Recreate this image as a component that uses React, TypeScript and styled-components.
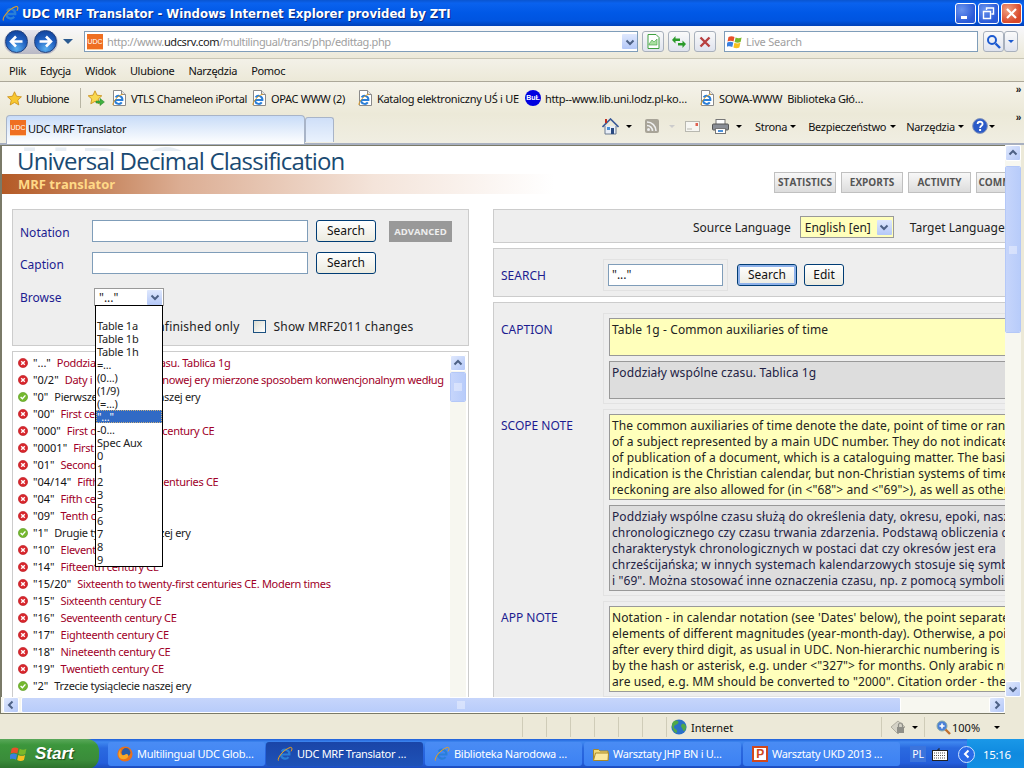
import React from 'react';
import styled, { createGlobalStyle } from 'styled-components';

const UI_FONT = '"Noto Sans", "DejaVu Sans", sans-serif';

const GlobalStyle = createGlobalStyle`
  html, body {
    margin: 0;
    padding: 0;
    width: 1024px;
    height: 768px;
    overflow: hidden;
    font-family: ${UI_FONT};
    font-size: 11px;
  }
  * { box-sizing: border-box; }
`;

const Window = styled.div`
  width: 1024px;
  height: 768px;
  display: flex;
  flex-direction: column;
  background: #ece9d8;
  overflow: hidden;
  letter-spacing: -0.3px;
`;

/* ---------- title bar ---------- */
const TitleBar = styled.div`
  height: 26px;
  flex: none;
  display: flex;
  align-items: center;
  padding: 0 2px 0 2px;
  letter-spacing: 0;
  background: linear-gradient(180deg, #0a55d0 0%, #0a62ee 12%, #0058e6 50%, #0054e0 80%, #0040b8 100%);
`;

const TitleText = styled.div`
  flex: 1;
  margin-left: 3px;
  color: #fff;
  font: bold 13px "DejaVu Sans Condensed", "Liberation Sans", sans-serif;
  text-shadow: 1px 1px 0 #0a2a80;
  white-space: nowrap;
`;

const WinButton = styled.div<{ $close?: boolean }>`
  width: 21px;
  height: 21px;
  margin-left: 2px;
  border: 1px solid #fff;
  border-radius: 3px;
  display: flex;
  align-items: center;
  justify-content: center;
  background: ${(p) =>
    p.$close
      ? 'radial-gradient(circle at 30% 30%, #f0a080, #d8482a 70%)'
      : 'radial-gradient(circle at 30% 30%, #6a94ee, #2a5ad8 70%)'};
`;

/* ---------- address row ---------- */
const AddressRow = styled.div`
  height: 33px;
  flex: none;
  display: flex;
  align-items: center;
  padding: 0 0 1px 4px;
  background: linear-gradient(180deg, #f8f8fc, #ece9d8);
  border-bottom: 1px solid #c8c5b4;
`;

const NavCapsule = styled.div`
  width: 54px;
  height: 24px;
  border-radius: 12px;
  display: flex;
  align-items: center;
  justify-content: space-between;
  padding: 0 1px;
  background: linear-gradient(180deg, #e6e6ee, #b8b8c4);
`;

const NavBall = styled.div`
  width: 23px;
  height: 23px;
  border-radius: 50%;
  border: 1px solid #20407c;
  display: flex;
  align-items: center;
  justify-content: center;
  background: radial-gradient(circle at 50% 85%, #5ab0f0 0%, #2060c0 50%, #0c3a90 100%);
`;

const TinyCaret = styled.span<{ $color?: string; $ml?: number; $big?: boolean }>`
  display: inline-block;
  flex: none;
  width: 0;
  height: 0;
  border-left: ${(p) => (p.$big ? 5 : 3)}px solid transparent;
  border-right: ${(p) => (p.$big ? 5 : 3)}px solid transparent;
  border-top: ${(p) => (p.$big ? 5 : 3)}px solid ${(p) => p.$color || '#000'};
  margin-left: ${(p) => p.$ml ?? 0}px;
`;

const AddressBox = styled.div`
  width: 554px;
  height: 21px;
  margin-left: 11px;
  border: 1px solid #7f9db9;
  background: #fff;
  display: flex;
  align-items: center;
  padding-left: 2px;
  font-size: 11px;
  letter-spacing: -0.38px;
  color: #a0a0a0;
  white-space: nowrap;
`;

const Domain = styled.span`
  color: #222;
`;

const Favicon = styled.span<{ $mr?: number }>`
  flex: none;
  width: 16px;
  height: 16px;
  background: #ef6f22;
  color: #fff;
  font: 7px/15px "Liberation Sans", sans-serif;
  letter-spacing: 0;
  text-align: center;
  border-bottom: 1px solid #ffd0a0;
  overflow: hidden;
  margin-right: ${(p) => p.$mr ?? 0}px;
`;

const ComboArrow = styled.div`
  width: 15px;
  height: 15px;
  flex: none;
  margin-left: auto;
  display: flex;
  align-items: center;
  justify-content: center;
  border-radius: 1px;
  background: linear-gradient(180deg, #dfe8fd, #b4c8f8);
`;

const ToolBtn = styled.div<{ $ml: number; $w?: number }>`
  width: ${(p) => p.$w ?? 22}px;
  height: 21px;
  flex: none;
  margin-left: ${(p) => p.$ml}px;
  border: 1px solid #a8b0bc;
  border-radius: 3px;
  background: linear-gradient(180deg, #fafafa, #dfe3ee);
  display: flex;
  align-items: center;
  justify-content: center;
`;

const LiveSearch = styled.div`
  width: 254px;
  height: 21px;
  margin-left: 8px;
  flex: none;
  border: 1px solid #7f9db9;
  background: #fff;
  display: flex;
  align-items: center;
  gap: 3px;
  padding-left: 2px;
  color: #a0a0a0;
  font-size: 11px;
  letter-spacing: -0.2px;
`;

/* ---------- menu and favourites ---------- */
const MenuRow = styled.div`
  height: 23px;
  flex: none;
  display: flex;
  align-items: center;
  padding: 1px 0 0 9px;
  gap: 14px;
  color: #111;
  background: linear-gradient(180deg, #f3f1e8, #ece9d8);
  border-bottom: 1px solid #aca899;
`;

const FavRow = styled.div`
  height: 32px;
  flex: none;
  position: relative;
  display: flex;
  align-items: center;
  padding-left: 7px;
  color: #111;
  background: linear-gradient(180deg, #f5f3ea, #ece9d8);
  white-space: nowrap;
`;

const FavLabel = styled.span`
  margin-left: 4px;
  letter-spacing: -0.5px;
`;

const FavSep = styled.div`
  width: 1px;
  height: 20px;
  background: #b8b5a4;
  margin: 0 7px 0 11px;
`;

const FavLink = styled.span<{ $ml?: number; $w: number }>`
  display: flex;
  align-items: center;
  gap: 4px;
  margin-left: ${(p) => p.$ml ?? 0}px;
  width: ${(p) => p.$w}px;
  flex: none;
`;

const Chevrons = styled.span<{ $top: number }>`
  position: absolute;
  right: 3px;
  top: ${(p) => p.$top}px;
  font: bold 10px "Liberation Sans", sans-serif;
  color: #111;
`;

const TabRow = styled.div`
  height: 31px;
  flex: none;
  position: relative;
  display: flex;
  align-items: center;
  padding-left: 6px;
  color: #111;
  background: linear-gradient(180deg, #ece9d8, #f0eee2);
  border-bottom: 2px solid #a8b0c0;
`;

const ActiveTab = styled.div`
  width: 299px;
  height: 29px;
  margin-top: 1px;
  border: 1px solid #a8b4c8;
  border-bottom: none;
  border-radius: 4px 4px 0 0;
  display: flex;
  align-items: center;
  gap: 2px;
  padding: 0 0 3px 3px;
  background: linear-gradient(180deg, #c8dcf8, #fff);
`;

const NewTab = styled.div`
  width: 29px;
  height: 25px;
  margin-top: 2px;
  border: 1px solid #a8b4c8;
  border-bottom: none;
  border-radius: 3px 3px 0 0;
  background: linear-gradient(180deg, #cfdff8, #eaf2fd);
`;

const CommandBar = styled.div`
  position: absolute;
  left: 602px;
  top: 0;
  height: 24px;
  display: flex;
  align-items: center;
`;

const CommandText = styled.span<{ $ml: number }>`
  margin-left: ${(p) => p.$ml}px;
  white-space: nowrap;
`;

const IconSlot = styled.span<{ $ml?: number; $mr?: number }>`
  display: flex;
  flex: none;
  margin-left: ${(p) => p.$ml ?? 0}px;
  margin-right: ${(p) => p.$mr ?? 0}px;
`;

/* ---------- page viewport ---------- */
const Viewport = styled.div`
  height: 552px;
  flex: none;
  display: flex;
  padding-right: 3px;
`;

const Page = styled.div`
  width: 1005px;
  flex: none;
  background: #fff;
  border-left: 2px solid #7a7a68;
  border-top: 1px solid #7a7a68;
  overflow: hidden;
  color: #222;
  font-size: 12px;
  letter-spacing: 0;
`;

const Header = styled.div`
  height: 63px;
  display: flex;
  justify-content: space-between;
  position: relative;
`;

const Watermark = styled.div`
  position: absolute;
  left: 16px;
  top: 0;
  height: 5px;
  overflow: hidden;
  font: bold 72px/50px "Open Sans", sans-serif;
  letter-spacing: 6px;
  color: #e6ecf2;
`;

const Brand = styled.div`
  width: 600px;
  display: flex;
  flex-direction: column;
  padding-top: 2px;
  position: relative;
`;

const BrandTitle = styled.div`
  height: 26px;
  padding-left: 15px;
  font: 24px/26px "Open Sans", "Noto Sans", sans-serif;
  color: #1a4a72;
  letter-spacing: -0.8px;
  white-space: nowrap;
`;

const BrandBand = styled.div`
  height: 20px;
  padding-left: 16px;
  font: bold 13px/20px "Open Sans", sans-serif;
  color: #ffd987;
  background: linear-gradient(90deg, #b45a26 0%, #c98a64 18%, #dcae94 30%, #f4e4da 62%, #fff 92%);
`;

const TopTabs = styled.div`
  display: flex;
  gap: 5px;
  padding-top: 26px;
  margin-right: -34px;
`;

const TopTab = styled.div<{ $w: number }>`
  width: ${(p) => p.$w}px;
  height: 21px;
  border: 1px solid #c0c0c0;
  background: linear-gradient(180deg, #f8f8f8, #dcdcdc);
  color: #555;
  font: bold 10px/19px "Open Sans", "Noto Sans", sans-serif;
  text-align: center;
  overflow: hidden;
  white-space: nowrap;
`;

const Columns = styled.div`
  display: grid;
  grid-template-columns: 457px 560px;
  column-gap: 24px;
  padding: 0 0 0 10px;
`;

const Column = styled.div`
  display: flex;
  flex-direction: column;
  gap: 5px;
  position: relative;
`;

const Panel = styled.div`
  background: #eee;
  border: 1px solid #ccc;
`;

const FormPanel = styled(Panel)`
  height: 137px;
  padding: 10px 0 0 7px;
  display: flex;
  flex-direction: column;
  gap: 10px;
`;

const FormRow = styled.div<{ $mt?: number }>`
  display: flex;
  align-items: center;
  height: 22px;
  margin-top: ${(p) => p.$mt ?? 0}px;
`;

const Label = styled.div<{ $w: number }>`
  width: ${(p) => p.$w}px;
  flex: none;
  color: #1c1c90;
`;

const FormLabel = styled(Label)`
  padding-top: 2px;
`;

const TextInput = styled.div<{ $w: number }>`
  width: ${(p) => p.$w}px;
  height: 22px;
  flex: none;
  background: #fff;
  border: 1px solid #7f9db9;
  padding: 2px 3px;
  line-height: 15px;
`;

const XpButton = styled.div<{ $w: number; $ml: number; $focus?: boolean }>`
  width: ${(p) => p.$w}px;
  height: 22px;
  flex: none;
  margin-left: ${(p) => p.$ml}px;
  border: 1px solid #003c74;
  border-radius: 3px;
  background: linear-gradient(180deg, #fff, #ecebe0);
  text-align: center;
  line-height: 19px;
  color: #111;
  box-shadow: ${(p) => (p.$focus ? 'inset 0 0 0 2px #8fb2ea' : 'none')};
`;

const Advanced = styled.div`
  width: 63px;
  height: 21px;
  flex: none;
  margin-left: 13px;
  background: #999;
  color: #eee;
  font: bold 9.5px/21px "Open Sans", "Noto Sans", sans-serif;
  text-align: center;
`;

const SelectBox = styled.div<{ $w: number; $ml?: number; $bg?: string; $h?: number }>`
  width: ${(p) => p.$w}px;
  height: ${(p) => p.$h ?? 18}px;
  flex: none;
  margin-left: ${(p) => p.$ml ?? 0}px;
  background: ${(p) => p.$bg ?? '#fff'};
  border: 1px solid #999;
  display: flex;
  align-items: center;
  padding: 0 1px 0 4px;
  white-space: nowrap;
`;

const CheckRow = styled.div`
  display: flex;
  align-items: center;
  height: 16px;
  margin-top: 0;
  padding-left: 75px;
  letter-spacing: 0.2px;
`;

const CheckBox = styled.span<{ $ml: number }>`
  width: 13px;
  height: 13px;
  flex: none;
  margin-left: ${(p) => p.$ml}px;
  margin-right: 7px;
  background: linear-gradient(135deg, #dcdcd0, #fff);
  border: 1px solid #1c5180;
`;

const Dropdown = styled.div`
  position: absolute;
  left: 83px;
  top: 96px;
  width: 68px;
  height: 262px;
  background: #fff;
  border: 1px solid #000;
  z-index: 5;
  font-size: 11px;
  letter-spacing: -0.2px;
  color: #222;
`;

const DropRow = styled.div<{ $selected?: boolean }>`
  height: 13px;
  line-height: 13px;
  padding-left: 1px;
  white-space: nowrap;
  color: ${(p) => (p.$selected ? '#fff' : 'inherit')};
  background: ${(p) => (p.$selected ? '#316ac5' : 'transparent')};
  outline: ${(p) => (p.$selected ? '1px dotted #c8b080' : 'none')};
  outline-offset: -1px;
`;

const ListPanel = styled.div`
  height: 360px;
  background: #fff;
  border: 1px solid #ccc;
  display: flex;
  padding: 3px 2px 0 4px;
`;

const ListBody = styled.div`
  flex: 1;
  margin-top: -1px;
  font-size: 11px;
  letter-spacing: -0.3px;
  overflow: hidden;
`;

const ListRow = styled.div`
  height: 17px;
  display: flex;
  align-items: center;
  white-space: nowrap;
  padding-left: 1px;
`;

const StatusDot = styled.svg`
  flex: none;
  margin-right: 5px;
`;

const Code = styled.span`
  color: #111;
  margin-right: 6px;
  letter-spacing: 0;
`;

const Caption = styled.span<{ $ok?: boolean }>`
  color: ${(p) => (p.$ok ? '#222' : '#a00028')};
`;

const LangPanel = styled(Panel)`
  height: 34px;
  display: flex;
  align-items: center;
  padding: 2px 0 0 199px;
  white-space: nowrap;
`;

const TargetLabel = styled.span`
  margin-left: 16px;
`;

const SearchPanel = styled(Panel)`
  height: 49px;
  display: flex;
  align-items: center;
  padding: 5px 0 0 7px;
`;

const SearchWell = styled.div`
  padding: 4px;
  border: 1px solid #e2e2e2;
  flex: none;
`;

const EditorPanel = styled(Panel)`
  padding: 10px 0 0 7px;
  display: flex;
  flex-direction: column;
  gap: 5px;
`;

const EditorRow = styled.div`
  display: flex;
  align-items: flex-start;
`;

const EditorLabel = styled(Label)`
  padding-top: 8px;
`;

const Well = styled.div`
  flex: 1;
  padding: 4px 0 4px 5px;
  border: 1px solid #e2e2e2;
  display: flex;
  flex-direction: column;
  gap: 5px;
`;

const Note = styled.div<{ $gray?: boolean; $h: number }>`
  height: ${(p) => p.$h}px;
  border: 1px solid #999;
  background: ${(p) => (p.$gray ? '#ddd' : '#ffffbb')};
  color: ${(p) => (p.$gray ? '#222244' : '#222')};
  padding: 3px 2px 0;
  line-height: 16px;
  letter-spacing: 0.1px;
  white-space: pre;
  overflow: hidden;
`;

/* ---------- scroll bars ---------- */
const VTrack = styled.div<{ $h: number }>`
  width: 16px;
  height: ${(p) => p.$h}px;
  flex: none;
  display: flex;
  flex-direction: column;
  background: #f7f7f0;
`;

const ScrollBtn = styled.div`
  width: 16px;
  height: 16px;
  flex: none;
  border: 1px solid #fff;
  border-radius: 2px;
  display: flex;
  align-items: center;
  justify-content: center;
  background: linear-gradient(135deg, #dfe8fd, #b4c8f8);
`;

const VThumb = styled.div<{ $h: number; $mt: number }>`
  width: 16px;
  height: ${(p) => p.$h}px;
  margin-top: ${(p) => p.$mt}px;
  flex: none;
  border: 1px solid #fff;
  border-radius: 2px;
  outline: 1px solid #b4c8f8;
  outline-offset: -1px;
  display: flex;
  align-items: center;
  justify-content: center;
  background: linear-gradient(90deg, #c6d5fb, #b8ccfa);
`;

const Spacer = styled.div`
  flex: 1;
`;

const HScrollRow = styled.div`
  height: 17px;
  flex: none;
  display: flex;
  align-items: center;
  padding-left: 2px;
  border-left: 1px solid #7a7a68;
  margin-right: 19px;
  background: #f7f7f0;
  border-bottom: 1px solid #7a7a68;
`;

const HThumb = styled.div`
  width: 880px;
  height: 16px;
  flex: none;
  margin-left: 2px;
  border: 1px solid #fff;
  border-radius: 2px;
  display: flex;
  align-items: center;
  justify-content: center;
  background: linear-gradient(180deg, #c6d5fb, #b8ccfa);
`;

/* ---------- status bar ---------- */
const StatusBar = styled.div`
  height: 25px;
  flex: none;
  display: flex;
  align-items: center;
  padding: 1px 0 0 522px;
  color: #111;
  background: #ece9d8;
  letter-spacing: 0;
`;

const StatusCell = styled.div<{ $w: number }>`
  width: ${(p) => p.$w}px;
  height: 20px;
  flex: none;
  border-left: 1px solid #cfccb8;
  display: flex;
  align-items: center;
  white-space: nowrap;
`;

/* ---------- task bar ---------- */
const TaskBar = styled.div`
  height: 30px;
  flex: none;
  display: flex;
  align-items: center;
  color: #fff;
  background: linear-gradient(180deg, #1f5fd8 0%, #3f88f0 10%, #2a6ae0 30%, #245edb 80%, #1a48b8 100%);
`;

const StartButton = styled.div`
  width: 99px;
  height: 30px;
  flex: none;
  display: flex;
  align-items: center;
  gap: 7px;
  padding-left: 10px;
  border-radius: 0 12px 12px 0;
  background: linear-gradient(180deg, #5aa85a 0%, #3c963c 20%, #3a8c3a 70%, #2c702c 100%);
  color: #fff;
  font: italic bold 17px "Liberation Sans", sans-serif;
  letter-spacing: 0;
  text-shadow: 1px 1px 1px #1c4a1c;
`;

const TaskButton = styled.div<{ $active?: boolean; $ml?: number }>`
  width: 157px;
  height: 24px;
  flex: none;
  margin-left: ${(p) => p.$ml ?? 2}px;
  padding-bottom: 1px;
  border-radius: 3px;
  display: flex;
  align-items: center;
  gap: 4px;
  padding-left: ${(p) => (p.$active ? 11 : 9)}px;
  white-space: nowrap;
  overflow: hidden;
  font-size: 11px;
  background: ${(p) =>
    p.$active
      ? 'linear-gradient(180deg, #1a45a8, #1e52b7)'
      : 'linear-gradient(180deg, #4a8cf4, #3c81f3)'};
`;

const LangTag = styled.div`
  width: 16px;
  height: 16px;
  flex: none;
  margin-left: 10px;
  background: #3c74dc;
  text-align: center;
  line-height: 16px;
  font-size: 10.5px;
`;

const Tray = styled.div`
  width: 57px;
  height: 30px;
  flex: none;
  padding-left: 16px;
  display: flex;
  align-items: center;
  font-size: 11.5px;
  background: linear-gradient(180deg, #1a98e8, #0f8adf 50%, #1290e4);
`;

const TrayToggle = styled.div`
  width: 17px;
  height: 17px;
  flex: none;
  margin-left: 10px;
  margin-right: -8px;
  z-index: 1;
  border-radius: 50%;
  border: 1px solid #cfe4ff;
  background: #2a6ae8;
  display: flex;
  align-items: center;
  justify-content: center;
`;

const PowerPoint = styled.span`
  width: 16px;
  height: 16px;
  flex: none;
  background: #fff;
  border: 2px solid #d0481c;
  color: #d0481c;
  font: bold 12px/13px "Liberation Sans", sans-serif;
  text-align: center;
`;

const BukIcon = styled.span`
  width: 16px;
  height: 16px;
  flex: none;
  border-radius: 50%;
  background: #0000e0;
  color: #fff;
  font: bold 7px/16px "Liberation Sans", sans-serif;
  letter-spacing: 0;
  text-align: center;
`;

/* ---------- icons ---------- */
const IeIcon = ({ size = 16 }: { size?: number }) => (
  <svg width={size} height={size} viewBox="0 0 16 16" style={{ flex: 'none' }}>
    <path d="M4 8.5h8.4A4.3 4.3 0 0 0 4.6 5.6M3.9 8.5a4.3 4.3 0 0 0 7.6 2.6" fill="none" stroke="#2a7fd8" strokeWidth="2.2" />
    <path d="M1.4 14.6C0 12.4 6 3.6 13.4 1.4c2.2-.3 1.8 2.6.6 4" fill="none" stroke="#e8a020" strokeWidth="1" />
  </svg>
);

const PageIe = () => (
  <svg width="15" height="16" viewBox="0 0 15 16" style={{ flex: 'none' }}>
    <path d="M1.5.5h8l4 4v11h-12z" fill="#fff" stroke="#8a8a8a" />
    <path d="M9.5.5v4h4" fill="#e8e8e8" stroke="#8a8a8a" />
    <path d="M3 10h7.4A3.8 3.8 0 0 0 3.6 7.4M3 10a3.8 3.8 0 0 0 6.8 2.4" fill="none" stroke="#2a7fd8" strokeWidth="2" />
    <path d="M1 15C0 13 5 6 11 4" fill="none" stroke="#e8a020" strokeWidth=".9" />
  </svg>
);

const Star = () => (
  <svg width="15" height="15" viewBox="0 0 16 16" style={{ flex: 'none' }}>
    <path d="M8 .8l2.2 4.8 5.2.6-3.9 3.5 1.1 5.2L8 12.2l-4.6 2.7 1.1-5.2L.6 6.2l5.2-.6z" fill="#f8c830" stroke="#c88a10" strokeWidth=".8" />
  </svg>
);

const StarAdd = () => (
  <svg width="17" height="16" viewBox="0 0 17 16" style={{ flex: 'none' }}>
    <path d="M7 .8l2 4.4 4.8.6-3.6 3.2 1 4.8L7 11.4l-4.2 2.4 1-4.8L.2 5.8 5 5.2z" fill="#f8d850" stroke="#c88a10" strokeWidth=".8" />
    <path d="M8 11h4V8.4l4.4 3.6-4.4 3.6V13H8z" fill="#40b040" stroke="#208020" strokeWidth=".5" />
  </svg>
);

const Flag = ({ size = 16 }: { size?: number }) => (
  <svg width={size} height={size} viewBox="0 0 16 16" style={{ flex: 'none' }}>
    <path d="M1.5 3c2-1 4-1 6 0l-1 4.6c-2-1-4-1-6 0z" fill="#e8502a" />
    <path d="M8.6 3.4c2 1 4 1 6 0l-1 4.6c-2 1-4 1-6 0z" fill="#7cb82a" />
    <path d="M.3 8.4c2-1 4-1 6 0l-1 4.6c-2-1-4-1-6 0z" fill="#3a80e0" />
    <path d="M7.4 8.8c2 1 4 1 6 0l-1 4.6c-2 1-4 1-6 0z" fill="#f8c020" />
  </svg>
);

const Chevron = ({ dir, color = '#4d6185' }: { dir: 'up' | 'down' | 'left' | 'right'; color?: string }) => {
  const d = {
    up: 'M1.5 6.5L5 3l3.5 3.5',
    down: 'M1.5 3.5L5 7l3.5-3.5',
    left: 'M6.5 1.5L3 5l3.5 3.5',
    right: 'M3.5 1.5L7 5 3.5 8.5',
  }[dir];
  return (
    <svg width="10" height="10" viewBox="0 0 10 10">
      <path d={d} fill="none" stroke={color} strokeWidth="2" />
    </svg>
  );
};

const Grip = ({ horizontal }: { horizontal?: boolean }) => (
  <svg width="8" height="8" viewBox="0 0 8 8">
    {[1, 3, 5, 7].map((v) =>
      horizontal ? (
        <path key={v} d={`M${v} 0v8`} stroke="#eef2fe" />
      ) : (
        <path key={v} d={`M0 ${v}h8`} stroke="#eef2fe" />
      ),
    )}
  </svg>
);

const Dot = ({ ok }: { ok?: boolean }) => (
  <StatusDot width="10" height="10" viewBox="0 0 10 10">
    <circle cx="5" cy="5" r="4.6" fill={ok ? '#74b82e' : '#d8262c'} stroke={ok ? '#5a9a20' : '#b81820'} strokeWidth=".6" />
    {ok ? (
      <path d="M2.6 5l1.8 1.8 3-3.4" fill="none" stroke="#fff" strokeWidth="1.4" />
    ) : (
      <path d="M3.2 3.2l3.6 3.6M6.8 3.2l-3.6 3.6" stroke="#fff" strokeWidth="1.4" />
    )}
  </StatusDot>
);

const Home = () => (
  <svg width="17" height="17" viewBox="0 0 17 17" style={{ flex: 'none' }}>
    <path d="M3 8v8h11V8" fill="#e8eef8" stroke="#6a7a90" />
    <path d="M.5 9l8-8 8 8" fill="none" stroke="#3a5a98" strokeWidth="1.6" />
    <rect x="9" y="10" width="3" height="6" fill="#2a4a80" />
    <rect x="5" y="9" width="3" height="3" fill="#4a90d8" />
    <rect x="3" y="1" width="2" height="4" fill="#c03020" />
  </svg>
);

const Rss = () => (
  <svg width="14" height="14" viewBox="0 0 14 14" style={{ flex: 'none' }}>
    <rect width="14" height="14" rx="2" fill="#a8a498" />
    <circle cx="3.5" cy="10.5" r="1.5" fill="#eee" />
    <path d="M2 6.5a5.5 5.5 0 0 1 5.5 5.5M2 3a9 9 0 0 1 9 9" fill="none" stroke="#eee" strokeWidth="1.6" />
  </svg>
);

const Mail = () => (
  <svg width="15" height="11" viewBox="0 0 15 11" style={{ flex: 'none' }}>
    <rect x=".5" y=".5" width="14" height="10" fill="#f6f6f2" stroke="#b8b8b0" />
    <path d="M2 8h5" stroke="#b8b8b0" />
    <rect x="10.5" y="2" width="2.5" height="3" fill="#e06050" />
  </svg>
);

const Printer = () => (
  <svg width="17" height="15" viewBox="0 0 17 15" style={{ flex: 'none' }}>
    <rect x="4" y=".5" width="9" height="5" fill="#fff" stroke="#777" />
    <rect x=".5" y="5" width="16" height="6" rx="1" fill="#8a8e96" stroke="#555" />
    <rect x="3.5" y="9.5" width="10" height="5" fill="#fff" stroke="#777" />
    <rect x="6" y="11" width="5" height="2" fill="#4a90d8" />
  </svg>
);

const Help = () => (
  <svg width="16" height="16" viewBox="0 0 16 16" style={{ flex: 'none' }}>
    <circle cx="8" cy="8" r="7.4" fill="#2a5ac8" stroke="#8a98b8" />
    <path d="M5.6 6c0-3 5-3 5 0 0 1.8-2.5 1.8-2.5 4" fill="none" stroke="#fff" strokeWidth="1.8" />
    <rect x="7.1" y="11" width="2" height="2" fill="#fff" />
  </svg>
);

const Globe = () => (
  <svg width="16" height="16" viewBox="0 0 16 16" style={{ flex: 'none' }}>
    <circle cx="8" cy="8" r="7.6" fill="#2a70c8" />
    <path d="M5 1.5c3 0 3 2.5 1.5 3.5S3 6 3 8s3 2 3 4-1 2.5-2 1.5S.8 9 1 6s2-4.5 4-4.5zM11 5c2-1 4 1 4 3s-1 4-2 4-1-2-2-3-1.500-3 0-4z" fill="#50a848" />
  </svg>
);

const LockIcon = () => (
  <svg width="17" height="16" viewBox="0 0 17 16" style={{ flex: 'none' }}>
    <path d="M1 8l7-6 7 6-7 7z" fill="#d4d2c6" stroke="#b0aea0" />
    <rect x="7" y="8" width="7" height="6" fill="#8f8f88" />
    <path d="M8.500 8V6a2 2 0 0 1 4 0v2" fill="none" stroke="#8f8f88" strokeWidth="1.2" />
  </svg>
);

const Magnifier = ({ plus }: { plus?: boolean }) => (
  <svg width="15" height="15" viewBox="0 0 15 15" style={{ flex: 'none' }}>
    <circle cx="6" cy="6" r={plus ? 5 : 4} fill={plus ? '#4a80d8' : 'none'} stroke={plus ? '#8aa' : '#1c5ad0'} strokeWidth={plus ? 1 : 2} />
    <path d="M9.500 9.500L14 14" stroke={plus ? '#c07030' : '#1c5ad0'} strokeWidth="2.4" />
    {plus && <path d="M3.500 6h5M6 3.500v5" stroke="#fff" strokeWidth="1.6" />}
  </svg>
);

const Firefox = () => (
  <svg width="16" height="16" viewBox="0 0 16 16" style={{ flex: 'none' }}>
    <circle cx="8" cy="8" r="7.6" fill="#e8701c" />
    <circle cx="9" cy="6.5" r="4.400" fill="#2a5ca8" />
    <path d="M2 11c2 3 7 3 9 0 1-1.500 0-3-1.500-3C8 8 7 10 5 9S3 5 4 3C1.500 5 1 8 2 11z" fill="#f8a828" />
  </svg>
);

const Folder = () => (
  <svg width="16" height="14" viewBox="0 0 16 14" style={{ flex: 'none' }}>
    <path d="M.5 2.500h5l1.500 1.500h8v9.500H.5z" fill="#f0d878" stroke="#a88828" />
    <path d="M.5 13.500L2.500 6h13l-.5 7.500z" fill="#fbe9a0" stroke="#a88828" />
  </svg>
);

const Keyboard = () => (
  <svg width="16" height="13" viewBox="0 0 16 13" style={{ flex: 'none' }}>
    <rect x=".5" y="2.500" width="15" height="10" fill="#fff" stroke="#222" />
    <path d="M2 5h12M2 7.500h12M2 10h12" stroke="#555" strokeDasharray="1 1" />
    <path d="M6 2.500V1h2" fill="none" stroke="#222" />
  </svg>
);

/* ---------- data ---------- */
const listRows: { code: string; text: string; ok?: boolean }[] = [
  { code: '"..."', text: 'Poddziały wspólne czasu. Tablica 1g' },
  { code: '"0/2"', text: 'Daty i lata początku nowej ery mierzone sposobem konwencjonalnym według' },
  { code: '"0"', text: 'Pierwsze tysiąclecie naszej ery', ok: true },
  { code: '"00"', text: 'First century CE' },
  { code: '"000"', text: 'First decade of first century CE' },
  { code: '"0001"', text: 'First year CE' },
  { code: '"01"', text: 'Second century CE' },
  { code: '"04/14"', text: 'Fifth to fifteenth centuries CE' },
  { code: '"04"', text: 'Fifth century CE' },
  { code: '"09"', text: 'Tenth century CE' },
  { code: '"1"', text: 'Drugie tysiąclecie naszej ery', ok: true },
  { code: '"10"', text: 'Eleventh century CE' },
  { code: '"14"', text: 'Fifteenth century CE' },
  { code: '"15/20"', text: 'Sixteenth to twenty-first centuries CE. Modern times' },
  { code: '"15"', text: 'Sixteenth century CE' },
  { code: '"16"', text: 'Seventeenth century CE' },
  { code: '"17"', text: 'Eighteenth century CE' },
  { code: '"18"', text: 'Nineteenth century CE' },
  { code: '"19"', text: 'Twentieth century CE' },
  { code: '"2"', text: 'Trzecie tysiąclecie naszej ery', ok: true },
  { code: '"20"', text: 'Twenty-first century CE' },
];

const dropItems = ['\u00a0', 'Table 1a', 'Table 1b', 'Table 1h', '=...', '(0...)', '(1/9)', '(=...)', '"..."', '-0...', 'Spec Aux', '0', '1', '2', '3', '5', '6', '7', '8', '9'];

const scopeEn = `The common auxiliaries of time denote the date, point of time or range
of a subject represented by a main UDC number. They do not indicate
of publication of a document, which is a cataloguing matter. The basic
indication is the Christian calendar, but non-Christian systems of time
reckoning are also allowed for (in <"68"> and <"69">), as well as other`;

const scopePl = `Poddziały wspólne czasu służą do określenia daty, okresu, epoki, nasz
chronologicznego czy czasu trwania zdarzenia. Podstawą obliczenia dla
charakterystyk chronologicznych w postaci dat czy okresów jest era
chrześcijańska; w innych systemach kalendarzowych stosuje się symbole
i "69". Można stosować inne oznaczenia czasu, np. z pomocą symboli`;

const appEn = `Notation - in calendar notation (see 'Dates' below), the point separates
elements of different magnitudes (year-month-day). Otherwise, a point
after every third digit, as usual in UDC. Non-hierarchic numbering is
by the hash or asterisk, e.g. under <"327"> for months. Only arabic num
are used, e.g. MM should be converted to "2000". Citation order - the`;

const App: React.FC = () => (
  <Window>
    <GlobalStyle />
    <TitleBar>
      <IeIcon size={17} />
      <TitleText>UDC MRF Translator - Windows Internet Explorer provided by ZTI</TitleText>
      <WinButton>
        <svg width="13" height="13" viewBox="0 0 13 13"><rect x="2" y="9" width="6" height="3" fill="#fff" /></svg>
      </WinButton>
      <WinButton>
        <svg width="13" height="13" viewBox="0 0 13 13"><path d="M4.500 3V1h7v6h-2M1.500 4.500h7v7h-7z" fill="none" stroke="#fff" strokeWidth="1.400" /></svg>
      </WinButton>
      <WinButton $close>
        <svg width="13" height="13" viewBox="0 0 13 13"><path d="M2 2l9 9M11 2l-9 9" stroke="#fff" strokeWidth="2.200" /></svg>
      </WinButton>
    </TitleBar>

    <AddressRow>
      <NavCapsule>
        <NavBall>
          <svg width="15" height="13" viewBox="0 0 15 13"><path d="M13.500 6.500H3M7 1.500l-5 5 5 5" fill="none" stroke="#fff" strokeWidth="2.600" /></svg>
        </NavBall>
        <NavBall>
          <svg width="15" height="13" viewBox="0 0 15 13"><path d="M1.500 6.500H12M8 1.500l5 5-5 5" fill="none" stroke="#fff" strokeWidth="2.600" /></svg>
        </NavBall>
      </NavCapsule>
      <TinyCaret $color="#2a5a90" $ml={5} $big />
      <AddressBox>
        <Favicon $mr={4}>UDC</Favicon>
        <span>http://www.<Domain>udcsrv.com</Domain>/multilingual/trans/php/edittag.php</span>
        <ComboArrow><Chevron dir="down" /></ComboArrow>
      </AddressBox>
      <ToolBtn $ml={4}>
        <svg width="15" height="15" viewBox="0 0 15 15"><path d="M2 .5h8l3 3v11H2z" fill="#fff" stroke="#40a040" /><path d="M3 10l3-4 2 2 3-3v6H3z" fill="#a8e0a0" stroke="#40a040" strokeWidth=".6" /></svg>
      </ToolBtn>
      <ToolBtn $ml={4}>
        <svg width="16" height="14" viewBox="0 0 16 14"><path d="M1 5l3.500-4v2.500H9V6H4.500v2.500zM15 9l-3.500 4v-2.500H7V8h4.500V5.500z" fill="#2a9a2a" /></svg>
      </ToolBtn>
      <ToolBtn $ml={4}>
        <svg width="12" height="12" viewBox="0 0 12 12"><path d="M1.500 1.500l9 9M10.500 1.500l-9 9" stroke="#b84040" strokeWidth="2.400" /></svg>
      </ToolBtn>
      <LiveSearch><Flag />Live Search</LiveSearch>
      <ToolBtn $ml={5} $w={21}><Magnifier /></ToolBtn>
      <ToolBtn $ml={0} $w={14}><TinyCaret $color="#1c5ad0" /></ToolBtn>
    </AddressRow>

    <MenuRow>
      <span>Plik</span><span>Edycja</span><span>Widok</span><span>Ulubione</span><span>Narzędzia</span><span>Pomoc</span>
    </MenuRow>

    <FavRow>
      <Star />
      <FavLabel>Ulubione</FavLabel>
      <FavSep />
      <StarAdd />
      <FavLink $ml={7} $w={140}><PageIe />VTLS Chameleon iPortal</FavLink>
      <FavLink $w={106}><PageIe />OPAC WWW (2)</FavLink>
      <FavLink $w={167}><PageIe />Katalog elektroniczny UŚ i UE</FavLink>
      <FavLink $w={175}><BukIcon>BuŁ</BukIcon>http--www.lib.uni.lodz.pl-ko…</FavLink>
      <FavLink $w={170}><PageIe />SOWA-WWW&nbsp; Biblioteka Głó…</FavLink>
      <Chevrons $top={2}>»</Chevrons>
    </FavRow>

    <TabRow>
      <ActiveTab><Favicon>UDC</Favicon>UDC MRF Translator</ActiveTab>
      <NewTab />
      <CommandBar>
        <Home />
        <TinyCaret $ml={7} />
        <IconSlot $ml={13}><Rss /></IconSlot>
        <TinyCaret $ml={10} $color="#ccc" />
        <IconSlot $ml={10}><Mail /></IconSlot>
        <IconSlot $ml={12}><Printer /></IconSlot>
        <TinyCaret $ml={7} />
        <CommandText $ml={13}>Strona</CommandText>
        <TinyCaret $ml={3} />
        <CommandText $ml={12}>Bezpieczeństwo</CommandText>
        <TinyCaret $ml={4} />
        <CommandText $ml={10}>Narzędzia</CommandText>
        <TinyCaret $ml={3} />
        <IconSlot $ml={8}><Help /></IconSlot>
        <TinyCaret $ml={1} />
      </CommandBar>
      <Chevrons $top={-2}>»</Chevrons>
    </TabRow>

    <Viewport>
      <Page>
        <Header>
          <Watermark aria-hidden="true">UDC</Watermark>
          <Brand>
            <BrandTitle>Universal Decimal Classification</BrandTitle>
            <BrandBand>MRF translator</BrandBand>
          </Brand>
          <TopTabs>
            <TopTab $w={62}>STATISTICS</TopTab>
            <TopTab $w={62}>EXPORTS</TopTab>
            <TopTab $w={63}>ACTIVITY</TopTab>
            <TopTab $w={63}>COMMENTS</TopTab>
          </TopTabs>
        </Header>

        <Columns>
          <Column>
            <FormPanel>
              <FormRow>
                <FormLabel $w={72}>Notation</FormLabel>
                <TextInput $w={216} />
                <XpButton $w={60} $ml={8}>Search</XpButton>
                <Advanced>ADVANCED</Advanced>
              </FormRow>
              <FormRow>
                <FormLabel $w={72}>Caption</FormLabel>
                <TextInput $w={216} />
                <XpButton $w={60} $ml={8}>Search</XpButton>
              </FormRow>
              <FormRow $mt={2}>
                <Label $w={74}>Browse</Label>
                <SelectBox $w={70}>
                  "..."
                  <ComboArrow><Chevron dir="down" /></ComboArrow>
                </SelectBox>
              </FormRow>
              <CheckRow>
                <CheckBox $ml={0} />
                <span>Show unfinished only</span>
                <CheckBox $ml={14} />
                <span>Show MRF2011 changes</span>
              </CheckRow>
            </FormPanel>
            <Dropdown>
              {dropItems.map((item, i) => (
                <DropRow key={i} $selected={item === '"..."'}>{item}</DropRow>
              ))}
            </Dropdown>

            <ListPanel>
              <ListBody>
                {listRows.map((row) => (
                  <ListRow key={row.code}>
                    <Dot ok={row.ok} />
                    <Code>{row.code}</Code>
                    <Caption $ok={row.ok}>{row.text}</Caption>
                  </ListRow>
                ))}
              </ListBody>
              <VTrack $h={350}>
                <ScrollBtn><Chevron dir="up" /></ScrollBtn>
                <VThumb $h={30} $mt={1}><Grip /></VThumb>
              </VTrack>
            </ListPanel>
          </Column>

          <Column>
            <LangPanel>
              <span>Source Language</span>
              <SelectBox $w={94} $ml={9} $bg="#ffffbb" $h={22}>
                English [en]
                <ComboArrow><Chevron dir="down" /></ComboArrow>
              </SelectBox>
              <TargetLabel>Target Language</TargetLabel>
            </LangPanel>

            <SearchPanel>
              <Label $w={102}>SEARCH</Label>
              <SearchWell>
                <TextInput $w={115}>"..."</TextInput>
              </SearchWell>
              <XpButton $w={60} $ml={9} $focus>Search</XpButton>
              <XpButton $w={40} $ml={7}>Edit</XpButton>
            </SearchPanel>

            <EditorPanel>
              <EditorRow>
                <EditorLabel $w={102}>CAPTION</EditorLabel>
                <Well>
                  <Note $h={38}>Table 1g - Common auxiliaries of time</Note>
                  <Note $gray $h={38}>Poddziały wspólne czasu. Tablica 1g</Note>
                </Well>
              </EditorRow>
              <EditorRow>
                <EditorLabel $w={102}>SCOPE NOTE</EditorLabel>
                <Well>
                  <Note $h={86}>{scopeEn}</Note>
                  <Note $gray $h={86}>{scopePl}</Note>
                </Well>
              </EditorRow>
              <EditorRow>
                <EditorLabel $w={102}>APP NOTE</EditorLabel>
                <Well>
                  <Note $h={86}>{appEn}</Note>
                </Well>
              </EditorRow>
            </EditorPanel>
          </Column>
        </Columns>
      </Page>
      <VTrack $h={552}>
        <ScrollBtn><Chevron dir="up" /></ScrollBtn>
        <VThumb $h={167} $mt={5}><Grip /></VThumb>
        <Spacer />
        <ScrollBtn><Chevron dir="down" /></ScrollBtn>
      </VTrack>
    </Viewport>

    <HScrollRow>
      <ScrollBtn><Chevron dir="left" /></ScrollBtn>
      <HThumb><Grip horizontal /></HThumb>
      <Spacer />
      <ScrollBtn><Chevron dir="right" /></ScrollBtn>
    </HScrollRow>

    <StatusBar>
      <StatusCell $w={24} /><StatusCell $w={24} /><StatusCell $w={24} />
      <StatusCell $w={24} /><StatusCell $w={24} /><StatusCell $w={24} />
      <StatusCell $w={215}>
        <IconSlot $ml={4} $mr={4}><Globe /></IconSlot>Internet
      </StatusCell>
      <StatusCell $w={43}>
        <IconSlot $ml={8}><LockIcon /></IconSlot>
        <TinyCaret $ml={5} />
      </StatusCell>
      <StatusCell $w={88}>
        <IconSlot $ml={11} $mr={1}><Magnifier plus /></IconSlot>100%
        <TinyCaret $ml={14} />
      </StatusCell>
    </StatusBar>

    <TaskBar>
      <StartButton><Flag size={18} />Start</StartButton>
      <TaskButton $ml={9}><Firefox />Multilingual UDC Glob…</TaskButton>
      <TaskButton $active $ml={1}><IeIcon />UDC MRF Translator …</TaskButton>
      <TaskButton><IeIcon />Biblioteka Narodowa …</TaskButton>
      <TaskButton><Folder />Warsztaty JHP BN i U…</TaskButton>
      <TaskButton><PowerPoint>P</PowerPoint>Warsztaty UKD 2013 …</TaskButton>
      <LangTag>PL</LangTag>
      <IconSlot $ml={6}><Keyboard /></IconSlot>
      <TrayToggle><Chevron dir="left" color="#fff" /></TrayToggle>
      <Tray>15:16</Tray>
    </TaskBar>
  </Window>
);

export default App;
